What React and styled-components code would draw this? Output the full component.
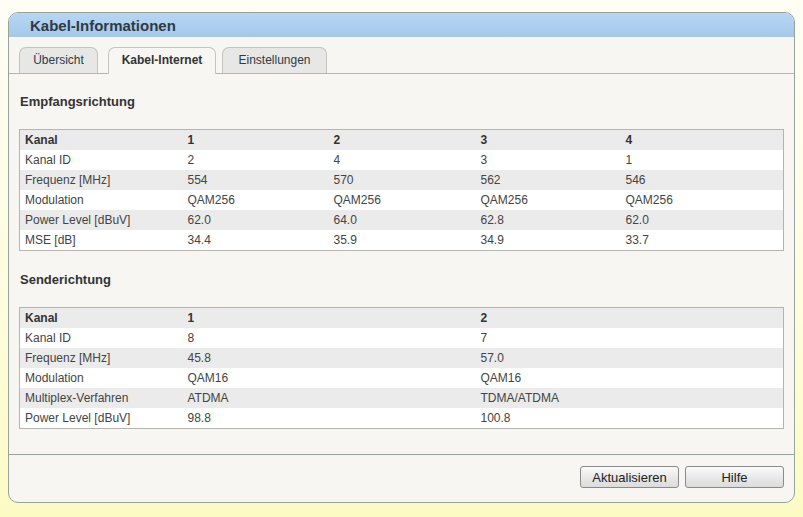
import React from 'react';
import styled, { createGlobalStyle } from 'styled-components';

const GlobalStyle = createGlobalStyle`
    html, body {
        margin: 0;
        padding: 0;
    }
    body {
        font-family: "Liberation Sans", Arial, sans-serif;
        background: linear-gradient(180deg, #fefef6 0%, #fefde0 55%, #fdfbc4 100%);
        min-height: 517px;
    }
`

const downstream = {
    columns: ['1', '2', '3', '4'],
    widths: [163, 146, 147, 145, null],
    rows: [
        ['Kanal ID', '2', '4', '3', '1'],
        ['Frequenz [MHz]', '554', '570', '562', '546'],
        ['Modulation', 'QAM256', 'QAM256', 'QAM256', 'QAM256'],
        ['Power Level [dBuV]', '62.0', '64.0', '62.8', '62.0'],
        ['MSE [dB]', '34.4', '35.9', '34.9', '33.7'],
    ],
}

const upstream = {
    columns: ['1', '2'],
    widths: [163, 293, null],
    rows: [
        ['Kanal ID', '8', '7'],
        ['Frequenz [MHz]', '45.8', '57.0'],
        ['Modulation', 'QAM16', 'QAM16'],
        ['Multiplex-Verfahren', 'ATDMA', 'TDMA/ATDMA'],
        ['Power Level [dBuV]', '98.8', '100.8'],
    ],
}

const tabs = [
    { label: 'Übersicht', width: 79 },
    { label: 'Kabel-Internet', width: 108, active: true },
    { label: 'Einstellungen', width: 105 },
]

const ChannelTable = ({ data }) => (
    <Table>
        <colgroup>
            {data.widths.map((w, i) => (
                <col key={i} style={w ? { width: w } : undefined} />
            ))}
        </colgroup>
        <thead>
            <Row>
                <HeadCell>Kanal</HeadCell>
                {data.columns.map((c) => <HeadCell key={c}>{c}</HeadCell>)}
            </Row>
        </thead>
        <tbody>
            {data.rows.map((r) => (
                <Row key={r[0]}>
                    {r.map((v, i) => <Cell key={i}>{v}</Cell>)}
                </Row>
            ))}
        </tbody>
    </Table>
)

const App = () => {
    return (
        <>
            <GlobalStyle />
            <Page>
                <Panel>
                    <Header>Kabel-Informationen</Header>
                    <TabBar>
                        {tabs.map((t) => (
                            <Tab key={t.label} $active={t.active} $width={t.width}>{t.label}</Tab>
                        ))}
                    </TabBar>
                    <Content>
                        <SectionTitle>Empfangsrichtung</SectionTitle>
                        <ChannelTable data={downstream} />
                        <SectionTitle>Senderichtung</SectionTitle>
                        <ChannelTable data={upstream} />
                    </Content>
                    <Footer>
                        <Button>Aktualisieren</Button>
                        <Button>Hilfe</Button>
                    </Footer>
                </Panel>
            </Page>
        </>
    )
}

const Page = styled.div`
    padding: 12px 8px 14px 8px;
`
const Panel = styled.div`
    border: 1px solid #9aa39a;
    border-radius: 10px;
    background: #f7f6f2;
    overflow: hidden;
`
const Header = styled.div`
    height: 24px;
    line-height: 25px;
    padding-left: 21px;
    background: linear-gradient(180deg, #b6d6f2 0%, #a5c8ea 100%);
    color: #2e3a48;
    font-weight: bold;
    font-size: 15px;
`
const TabBar = styled.div`
    display: flex;
    gap: 8px;
    align-items: flex-end;
    height: 37px;
    padding-left: 10px;
    border-bottom: 1px solid #b4b4b0;
    box-sizing: border-box;
`
const Tab = styled.div`
    width: ${(p) => p.$width}px;
    height: ${(p) => (p.$active ? '27px' : '26px')};
    box-sizing: border-box;
    border: 1px solid #c4c4c0;
    border-bottom: none;
    border-radius: 7px 7px 0 0;
    background: ${(p) => (p.$active ? '#f7f6f2' : '#e7e7e5')};
    color: ${(p) => (p.$active ? '#333' : '#2e3a48')};
    font-weight: ${(p) => (p.$active ? 'bold' : 'normal')};
    font-size: 12px;
    line-height: 25px;
    text-align: center;
    margin-bottom: ${(p) => (p.$active ? '-1px' : '0')};
    margin-left: ${(p) => (p.$active ? '2px' : '0')};
    margin-right: ${(p) => (p.$active ? '-2px' : '0')};
`
const Content = styled.div`
    padding: 19px 10px 25px 10px;
    border-bottom: 1px solid #9aa39a;
`
const SectionTitle = styled.div`
    font-weight: bold;
    font-size: 13px;
    color: #333;
    height: 19px;
    line-height: 18px;
    margin: 0 0 17px 1px;
    table + & {
        margin-top: 20px;
    }
`
const Table = styled.table`
    width: 100%;
    border-collapse: collapse;
    border: 1px solid #b4b4b0;
    table-layout: fixed;
    font-size: 12px;
    color: #444;
`
const Row = styled.tr`
    background: #ffffff;
    &:nth-child(even) {
        background: #ebebeb;
    }
    thead & {
        background: #ebebeb;
    }
`
const Cell = styled.td`
    height: 20px;
    padding: 0 0 0 5px;
    line-height: 20px;
    white-space: nowrap;
`
const HeadCell = styled.th`
    height: 20px;
    padding: 0 0 0 5px;
    text-align: left;
    font-weight: bold;
    color: #333;
`
const Footer = styled.div`
    display: flex;
    justify-content: flex-end;
    gap: 6px;
    padding: 11px 10px 14px 0;
`
const Button = styled.button`
    width: 99px;
    height: 22px;
    border: 1px solid #8a8a8a;
    border-radius: 3px;
    background: linear-gradient(180deg, #fbfbfb 0%, #e9e9e9 50%, #dcdcdc 100%);
    font-family: "Liberation Sans", Arial, sans-serif;
    font-size: 13px;
    color: #222;
    padding: 0;
`

export default App;
